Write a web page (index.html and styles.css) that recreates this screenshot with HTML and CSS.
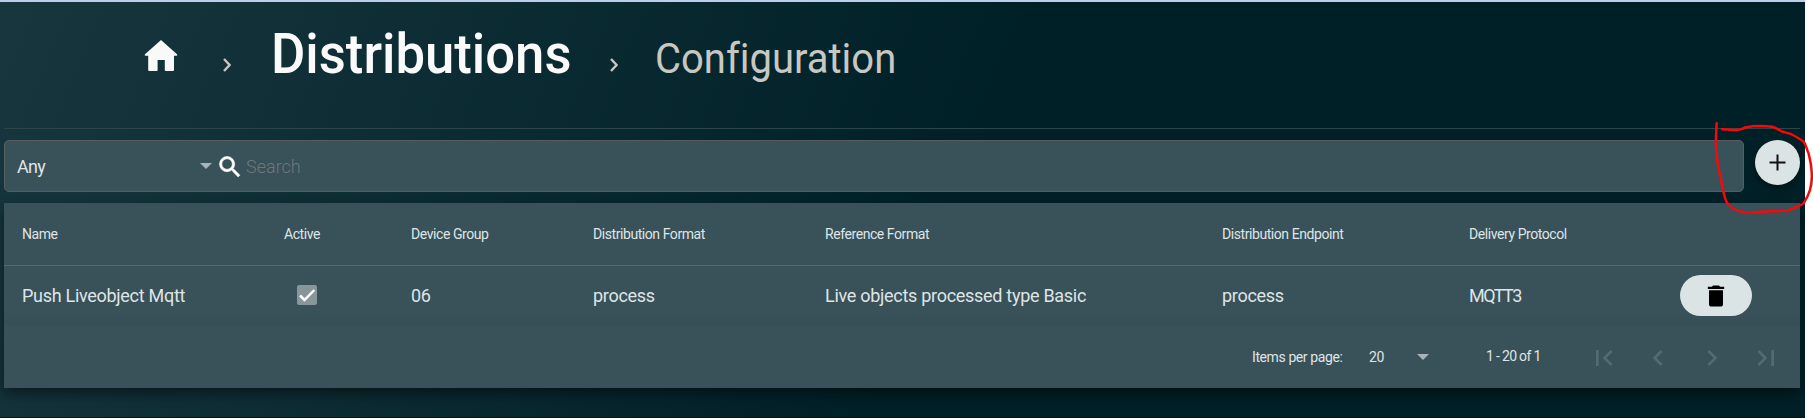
FILE: index.html
```
<!DOCTYPE html>
<html lang="en">
<head>
<meta charset="utf-8">
<title>Distributions - Configuration</title>
<link rel="stylesheet" href="styles.css">
</head>
<body>
<div class="app">
  <nav class="crumbs">
    <svg class="home" viewBox="0 0 34 31" width="34" height="31"><path d="M17 0 33 14.2Q34 15.6 32.4 15.8H30V30Q30 31 29 31H21.8Q20.8 31 20.8 30V20H13.6V30Q13.6 31 12.6 31H5.200Q4.200 31 4.200 30V15.800H1.600Q0 15.600 1 14.200Z" fill="#f9f9f9"/></svg>
    <svg class="sep" viewBox="0 0 8 14" width="8" height="14"><path d="M1 1 6.600 7 1 13" fill="none" stroke="#c8c8c1" stroke-width="2.400"/></svg>
    <h1 class="title"><span>Distributions</span></h1>
    <svg class="sep sep-two" viewBox="0 0 8 14" width="8" height="14"><path d="M1 1 6.600 7 1 13" fill="none" stroke="#c8c8c1" stroke-width="2.400"/></svg>
    <h2 class="subtitle"><span>Configuration</span></h2>
  </nav>

  <div class="toolbar">
    <div class="search">
      <div class="select"><span>Any</span><i class="arrow"></i></div>
      <svg viewBox="0 0 24 24" width="28" height="28"><path fill="#fff" stroke="#fff" stroke-width=".5" d="M15.500 14h-.79l-.28-.27A6.471 6.471 0 0 0 16 9.500 6.500 6.500 0 1 0 9.500 16c1.610 0 3.090-.59 4.230-1.570l.27.28v.79l5 4.990L20.490 19l-4.990-5zm-6 0C7.010 14 5 11.990 5 9.500S7.010 5 9.500 5 14 7.010 14 9.500 11.990 14 9.500 14z"/></svg>
      <span class="placeholder">Search</span>
    </div>
    <button class="add" aria-label="Add"><svg viewBox="0 0 17 17" width="17" height="17"><path d="M8.500 .5v16M.5 8.500h16" stroke="#111" stroke-width="2"/></svg></button>
  </div>

  <section class="panel">
    <div class="row head">
      <span>Name</span><span>Active</span><span>Device Group</span><span>Distribution Format</span><span>Reference Format</span><span>Distribution Endpoint</span><span>Delivery Protocol</span><span></span>
    </div>
    <div class="row item">
      <span>Push Liveobject Mqtt</span>
      <span class="check"><svg viewBox="0 0 20 20" width="20" height="20"><rect width="20" height="20" rx="2" fill="#87969b"/><path d="M3 10.500 7.500 15 17.300 5" fill="none" stroke="#fff" stroke-width="2.500"/></svg></span>
      <span>06</span><span>process</span><span>Live objects processed type Basic</span><span>process</span><span class="proto">MQTT3</span>
      <button class="delete" aria-label="Delete"><svg viewBox="0 0 24 24" width="28" height="28"><path d="M6 19c0 1.100.9 2 2 2h8c1.100 0 2-.9 2-2V7H6v12zM19 4h-3.500l-1-1h-5l-1 1H5v2h14V4z"/></svg></button>
    </div>
    <div class="pager">
      <span class="per">Items per page:</span>
      <span class="size">20</span><i class="arrow"></i>
      <span class="range">1 - 20 of 1</span>
      <div class="pages">
        <svg viewBox="0 0 24 24"><path d="M18.410 16.590L13.820 12l4.590-4.590L17 6l-6 6 6 6zM6 6h2v12H6z"/></svg>
        <svg viewBox="0 0 24 24"><path d="M15.410 7.410L14 6l-6 6 6 6 1.410-1.410L10.830 12z"/></svg>
        <svg viewBox="0 0 24 24"><path d="M10 6L8.590 7.410 13.170 12l-4.580 4.590L10 18l6-6z"/></svg>
        <svg viewBox="0 0 24 24"><path d="M5.590 7.410L10.180 12l-4.590 4.590L7 18l6-6-6-6zM16 6h2v12h-2z"/></svg>
      </div>
    </div>
  </section>
</div>
<svg class="marker" viewBox="1708 116 105 102" width="105" height="102"><path d="M1716.700 123.300C1716 134 1715.500 142 1716.300 150C1717 160 1718 168 1720 175C1722 183 1722 187 1723.500 192C1725.500 200 1726 204 1733 208.500C1740 212.500 1746 212.800 1754 212.500C1765 211 1778 211.500 1788 210.600C1793 208 1800 206 1803.500 203.500C1807 198 1808.500 195 1810 190C1812 183 1812 175 1811.500 170C1811 162 1809.500 158 1808.500 153C1806.500 149 1806 144 1803.500 141.500C1800 139 1795 136 1791 134C1787 132.500 1785 132.700 1782 131.500C1778 129.500 1776 127.500 1772 126.800C1764 125.800 1753 126 1745 127.500C1741 130 1738 130 1734 129.900L1722 129.300" fill="none" stroke="#f80808" stroke-width="2.500" stroke-linecap="round" stroke-linejoin="round"/></svg>
</body>
</html>
```
FILE: styles.css
```
* { box-sizing: border-box; }
body {
  margin: 0;
  background: #fff;
  font-family: Roboto, "Liberation Sans", sans-serif;
  font-variant-ligatures: none;
  color: #dfe5e6;
}
.app {
  width: 1805px;
  height: 418px;
  padding: 0 5px 0 4px;
  border-top: 2px solid #bccfea;
  border-bottom: 1px solid #00141c;
  background: linear-gradient(113deg, #17363e 0, #002027 960px);
  overflow: hidden;
}
.crumbs {
  display: flex;
  align-items: flex-start;
  height: 127px;
  padding-left: 140px;
  border-bottom: 1px solid #2c454b;
}
.home { margin-top: 38px; }
.sep { margin: 56px 0 0 45px; }
.title, .subtitle { margin: 0; white-space: nowrap; }
.title span, .subtitle span { display: inline-block; transform-origin: 0 50%; }
.title {
  width: 302px;
  margin: 19px 0 0 40px;
  font-size: 56px;
  line-height: 66px;
  font-weight: 500;
  color: #fafafa;
}
.title span { transform: scaleX(.94); }
.sep-two { margin-left: 37px; }
.subtitle {
  margin: 32px 0 0 37px;
  font-size: 42px;
  line-height: 50px;
  font-weight: 400;
  color: #c8c8c1;
}
.subtitle span { transform: scaleX(.952); }

.toolbar { display: flex; gap: 11px; margin-top: 11px; }
.search {
  display: flex;
  align-items: center;
  width: 1740px;
  height: 52px;
  padding-left: 12px;
  border: 1px solid #5a5d60;
  border-radius: 5px;
  background: #395159;
  font-size: 18px;
}
.select { display: flex; align-items: center; justify-content: space-between; width: 195px; letter-spacing: -.7px; }
.search svg { margin: 1px 0 0 4px; }
.arrow {
  border: 6px solid transparent;
  border-top-color: #a9b4b9;
  border-bottom-width: 0;
}
.placeholder { margin-left: 2px; font-weight: 300; color: #70777b; }
.add, .delete {
  display: flex;
  align-items: center;
  justify-content: center;
  padding: 0;
  border: 0;
  background: #dbe4e4;
}
.add {
  width: 45px;
  height: 45px;
  border-radius: 50%;
  box-shadow: 0 3px 7px rgba(0, 0, 0, .4);
}

.panel {
  margin-top: 11px;
  width: 1796px;
  height: 185px;
  background: #395159;
  box-shadow: 0 6px 12px rgba(0, 0, 0, .45);
}
.row {
  display: grid;
  grid-template-columns: 262px 127px 182px 232px 397px 247px 211px 72px;
  align-items: center;
  padding-left: 18px;
  white-space: nowrap;
}
.head { height: 63px; border-bottom: 1px solid #4f696f; font-size: 14px; letter-spacing: -.43px; }
.item { height: 59px; font-size: 18px; letter-spacing: -.29px; background: linear-gradient(#395159 75%, #364e56); }
.proto { letter-spacing: -1.500px; }
.check { display: flex; padding-left: 13px; margin-top: -1px; }
.delete { width: 72px; height: 41px; border-radius: 21px; }
.delete svg { margin-right: 1px; }
.pager {
  display: flex;
  align-items: center;
  justify-content: flex-end;
  height: 63px;
  padding-right: 18px;
  font-size: 14px;
  letter-spacing: -.4px;
  white-space: nowrap;
}
.per { width: 117px; }
.size { width: 48px; }
.range { width: 102px; margin-left: 57px; letter-spacing: -.6px; word-spacing: -.2px; margin-top: -2px; }
.pages { display: flex; gap: 22px; padding-top: 3px; }
.pages svg { width: 32px; height: 32px; fill: #526a72; }
.marker { position: absolute; left: 1708px; top: 116px; }
```
